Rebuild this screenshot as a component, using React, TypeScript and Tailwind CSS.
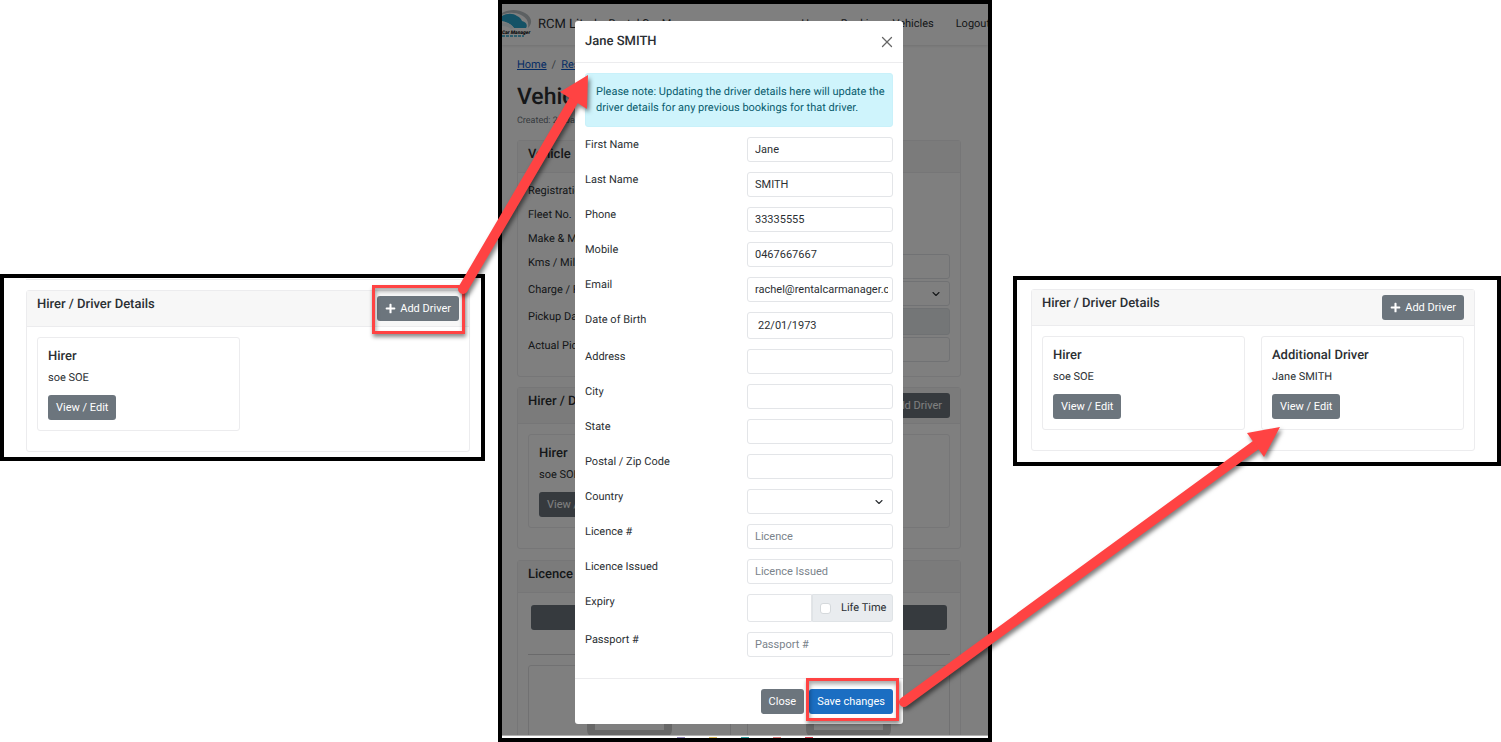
import { ChevronDown, X } from "lucide-react";
import { ReactNode } from "react";
import { FaPlus } from "react-icons/fa";

const buttonStyle =
  "block h-[25px] rounded-[3px] bg-[#6c757d] px-2 text-[11px] leading-4 text-white whitespace-nowrap";
const inputStyle =
  "block h-[25px] w-full min-w-0 rounded-[3px] border border-[#e3e5e8] bg-white pr-1 pl-[7px] text-[11px] text-[#2b2f33] placeholder:text-[#7a838b]";

type Field = {
  id: string;
  label: string;
  value?: string;
  placeholder?: string;
  kind?: "date" | "select" | "expiry";
};

const driverFields: Field[] = [
  { id: "firstName", label: "First Name", value: "Jane" },
  { id: "lastName", label: "Last Name", value: "SMITH" },
  { id: "phone", label: "Phone", value: "33335555" },
  { id: "mobile", label: "Mobile", value: "0467667667" },
  { id: "email", label: "Email", value: "rachel@rentalcarmanager.com" },
  { id: "dob", label: "Date of Birth", value: "22/01/1973", kind: "date" },
  { id: "address", label: "Address" },
  { id: "city", label: "City" },
  { id: "state", label: "State" },
  { id: "postcode", label: "Postal / Zip Code" },
  { id: "country", label: "Country", kind: "select" },
  { id: "licence", label: "Licence #", placeholder: "Licence" },
  { id: "issued", label: "Licence Issued", placeholder: "Licence Issued" },
  { id: "expiry", label: "Expiry", kind: "expiry" },
  { id: "passport", label: "Passport #", placeholder: "Passport #" },
];

// Red frame drawn over the button that has to be clicked
function Highlight({ className }: { className: string }) {
  return (
    <span
      className={`pointer-events-none absolute border-[3px] border-[#ff4343] shadow-[1px_3px_4px_rgba(0,0,0,0.45),inset_1px_3px_4px_rgba(0,0,0,0.35)] ${className}`}
    />
  );
}

function DriverCard({ role, name }: { role: string; name: string }) {
  return (
    <div className="h-[94px] rounded-[3px] border border-[#ececee] px-2.5 pt-2">
      <h3 className="text-[13px] leading-[22px] font-medium">{role}</h3>
      <p className="mt-0.5 mb-[9px] text-[11px] leading-4">{name}</p>
      <button type="button" className={buttonStyle}>
        View / Edit
      </button>
    </div>
  );
}

function HirerPanel({ highlight, children }: { highlight?: boolean; children: ReactNode }) {
  return (
    <div className="rounded-[3px] border border-[#ececee] bg-white pb-5">
      <div className="flex h-9 items-start justify-between border-b border-[#ececee] bg-[#f7f7f7] px-2.5 pt-[5px]">
        <h2 className="text-[13px] leading-[18px] font-medium">Hirer / Driver Details</h2>
        <div className="relative">
          <button type="button" className={buttonStyle}>
            <span className="flex items-center gap-1">
              <FaPlus className="size-[11px]" />
              Add Driver
            </span>
          </button>
          {highlight && (
            <Highlight className="-top-[11px] -right-1.5 -bottom-[13px] -left-[5px]" />
          )}
        </div>
      </div>
      <div className="grid grid-cols-2 gap-4 px-2.5 pt-2.5">{children}</div>
    </div>
  );
}

function SelectBox({ id }: { id: string }) {
  return (
    <div className="relative">
      <select id={id} className={`${inputStyle} appearance-none`}>
        <option></option>
      </select>
      <ChevronDown
        className="pointer-events-none absolute top-[7px] right-2 size-3"
        strokeWidth={2.25}
      />
    </div>
  );
}

function FieldControl({ field }: { field: Field }) {
  if (field.kind === "select") {
    return <SelectBox id={field.id} />;
  }
  if (field.kind === "expiry") {
    return (
      <div className="flex h-7">
        <input id={field.id} className="w-0 flex-1 rounded-l-[3px] border border-[#e3e5e8] px-2 text-[11px]" />
        <label className="flex w-[81px] items-center gap-2.5 rounded-r-[3px] border border-[#dfe3e6] bg-[#e9ecef] px-[7px] text-[11px] whitespace-nowrap">
          <input
            type="checkbox"
            className="size-[11px] shrink-0 appearance-none rounded-[3px] border border-[#d5d9dc] bg-white"
          />
          Life Time
        </label>
      </div>
    );
  }
  if (field.kind === "date") {
    return (
      <input
        id={field.id}
        defaultValue={field.value}
        className="block h-[27px] w-full min-w-0 rounded-[3px] border border-[#e3e5e8] px-2.5 text-[11px]"
      />
    );
  }
  return (
    <input
      id={field.id}
      defaultValue={field.value}
      placeholder={field.placeholder}
      className={inputStyle}
    />
  );
}

function DriverModal() {
  return (
    <div role="dialog" aria-label="Jane SMITH" className="w-[328px] rounded-[3px] bg-white">
      <div className="flex h-[42px] items-center justify-between border-b border-[#ececee] px-2.5">
        <h2 className="text-[13px] font-medium">Jane SMITH</h2>
        <button type="button" aria-label="Dismiss" className="-mr-[3px] text-[#666]">
          <X className="size-[18px]" strokeWidth={1.75} />
        </button>
      </div>
      <form className="px-2.5 pt-2.5">
        <p className="mb-2.5 rounded-[3px] border border-[#c9f1fa] bg-[#cff4fc] py-2.5 pr-1 pl-2.5 text-[11px] leading-4 text-[#0a5d6e]">
          Please note: Updating the driver details here will update the driver details for any
          previous bookings for that driver.
        </p>
        <div className="flex flex-col gap-2.5">
          {driverFields.map((field) => (
            <div key={field.id} className="grid grid-cols-2 items-start gap-4">
              <label htmlFor={field.id} className="text-[11px] leading-4">
                {field.label}
              </label>
              <FieldControl field={field} />
            </div>
          ))}
        </div>
      </form>
      <div className="mt-[21px] flex justify-end gap-[5px] border-t border-[#ececee] p-2.5">
        <button type="button" className={buttonStyle}>
          Close
        </button>
        <div className="relative">
          <button
            type="button"
            className="block h-[25px] rounded-[3px] bg-[#1b6ec2] px-2 text-[11px] leading-4 whitespace-nowrap text-white"
          >
            Save changes
          </button>
          <Highlight className="-top-[11px] -right-1.5 -bottom-[7px] -left-[3px]" />
        </div>
      </div>
    </div>
  );
}

function Logo() {
  return (
    <svg width="32" height="30" viewBox="0 0 32 30" className="shrink-0" aria-label="Rental Car Manager">
      <path d="M0 3C7-1 16-1 23 3c7 4 8 10 3 15 1-6-1-10-7-13C13 2 6 2 0 5z" fill="#b9c0c4" />
      <path d="M0 6c5-3 11-3 15 0 3 1 4 3 5 5 4 1 6 4 4 7H12c-3-4-7-6-12-7z" fill="#28a4cc" />
      <path d="M0 13c5-1 9 1 12 5l-3 1c-3-2-6-3-9-3z" fill="#e9f3f6" />
      <text x="0" y="24" fontSize="5" fontWeight="900" fontStyle="italic" fill="#111">
        Car Manager
      </text>
      <path d="M0 26h22" stroke="#28a4cc" strokeWidth="1.5" strokeDasharray="3 1" />
    </svg>
  );
}

function PhotoPlaceholder() {
  return (
    <div className="flex h-24 justify-center rounded-[3px] border border-[#e3e3e5] pt-2.5">
      <div className="h-[62px] w-[85px] rounded-lg border-8 border-[#d0d0d0]" />
    </div>
  );
}

function BookingPage() {
  return (
    <div className="h-full overflow-hidden bg-white">
      <nav className="flex h-[41px] items-center text-[11px] whitespace-nowrap shadow-[0_1px_3px_rgba(0,0,0,0.12)]">
        <Logo />
        <span className="ml-1 text-[13px]">RCM Lite</span>
        <span className="ml-1">by Rental Car Manager</span>
        <div className="ml-auto flex">
          <a href="#home" className="mr-2.5">Home</a>
          <a href="#bookings" className="mr-1.5">Bookings</a>
          <a href="#vehicles" className="mr-[22px]">Vehicles</a>
          <a href="#logout" className="-mr-0.5">Logout</a>
        </div>
      </nav>
      <div className="pr-[27px] pl-[15px]">
        <div className="flex gap-[5px] pt-3 text-[11px] leading-4">
          <a href="#home" className="text-[#0a58ca] underline">Home</a>
          <span className="text-[#6c757d]">/</span>
          <a href="#reservations" className="text-[#0a58ca] underline">Reservations</a>
        </div>
        <h1 className="mt-2.5 text-[23px] leading-7 font-medium">Vehicle</h1>
        <p className="mt-0.5 text-[9px] leading-4 text-[#6c757d]">Created: 22 Jan</p>

        <div className="mt-[11px] rounded-[3px] border border-[#ececee] pb-3.5 text-[11px]">
          <h2 className="h-8 border-b border-[#ececee] bg-[#f7f7f7] px-2.5 pt-0.5 text-[13px] leading-6 font-medium">
            Vehicle
          </h2>
          <div className="px-2.5 pt-1.5">
            <p className="leading-6">Registration</p>
            <p className="leading-6">Fleet No.</p>
            <p className="leading-6">Make &amp; Model</p>
            <div className="mt-[3px] grid grid-cols-2 gap-x-4 gap-y-0.5 leading-[18px]">
              <label htmlFor="kms">Kms / Mileage</label>
              <input id="kms" className={inputStyle} />
              <label htmlFor="charge">Charge / Fee</label>
              <SelectBox id="charge" />
              <label htmlFor="pickup">Pickup Date</label>
              <input id="pickup" readOnly className="h-[27px] w-full rounded-[3px] border border-[#dfe3e6] bg-[#e9ecef]" />
              <label htmlFor="actual">Actual Pickup</label>
              <input id="actual" className={inputStyle} />
            </div>
          </div>
        </div>

        <div className="mt-2.5">
          <HirerPanel>
            <DriverCard role="Hirer" name="soe SOE" />
            <div className="rounded-[3px] border border-[#ececee]" />
          </HirerPanel>
        </div>

        <div className="mt-[11px] rounded-[3px] border border-[#ececee]">
          <h2 className="h-8 border-b border-[#ececee] bg-[#f7f7f7] px-2.5 pt-0.5 text-[13px] leading-6 font-medium">
            Licence
          </h2>
          <div className="px-2.5 pt-3">
            <div className="mx-[3px] h-[25px] rounded-[3px] bg-[#6c757d]" />
            <hr className="mt-6 mb-2.5 border-[#d5d5d7]" />
            <div className="grid grid-cols-2 gap-4">
              <PhotoPlaceholder />
              <PhotoPlaceholder />
            </div>
          </div>
        </div>
      </div>
    </div>
  );
}

// Arrows that link the three steps
function StepArrows() {
  return (
    <svg
      className="pointer-events-none absolute inset-0 h-full w-full drop-shadow-[2px_3px_2px_rgba(0,0,0,0.5)]"
      viewBox="0 0 1501 742"
      preserveAspectRatio="none"
      fill="#ff4343"
      stroke="#ff4343"
    >
      <path d="M463 289L575 98" strokeWidth="10" strokeLinecap="round" />
      <path d="M588 75L587 109L560 92z" stroke="none" />
      <path d="M904 702L1260 442" strokeWidth="10" strokeLinecap="round" />
      <path d="M1280 427L1264 457L1247 433z" stroke="none" />
    </svg>
  );
}

export default function App() {
  return (
    <main className="relative grid min-h-screen grid-cols-[minmax(0,485fr)_minmax(0,507fr)_minmax(0,509fr)] items-center bg-white font-[Roboto,sans-serif] text-[#2b2f33] [text-rendering:geometricPrecision]">
      <section className="mb-[7px] border-4 border-black pr-[11px] pb-[5px] pl-[22px]">
        <div className="mb-2.5 h-0.5 border-b border-[#ececee]" />
        <HirerPanel highlight>
          <DriverCard role="Hirer" name="soe SOE" />
        </HirerPanel>
      </section>

      <section className="relative ml-[13px] h-screen overflow-hidden border-4 border-black">
        <BookingPage />
        <div className="absolute inset-0 flex items-start justify-center bg-black/50 pt-[17px] pr-3">
          <DriverModal />
        </div>
        <div className="absolute inset-x-0 bottom-0 flex h-[3px] items-end justify-center gap-6 border-t border-[#b0b0b0] bg-white">
          <span className="h-px w-2 bg-[#9a8fc0]" />
          <span className="h-px w-2 bg-[#e0c060]" />
          <span className="h-px w-2 bg-[#30a0a0]" />
          <span className="h-px w-2 bg-[#e08080]" />
          <span className="h-px w-2 bg-[#d04050]" />
        </div>
      </section>

      <section className="ml-[21px] border-4 border-black pt-[9px] pr-[22px] pb-[11px] pl-3.5">
        <HirerPanel>
          <DriverCard role="Hirer" name="soe SOE" />
          <DriverCard role="Additional Driver" name="Jane SMITH" />
        </HirerPanel>
      </section>

      <StepArrows />
    </main>
  );
}
